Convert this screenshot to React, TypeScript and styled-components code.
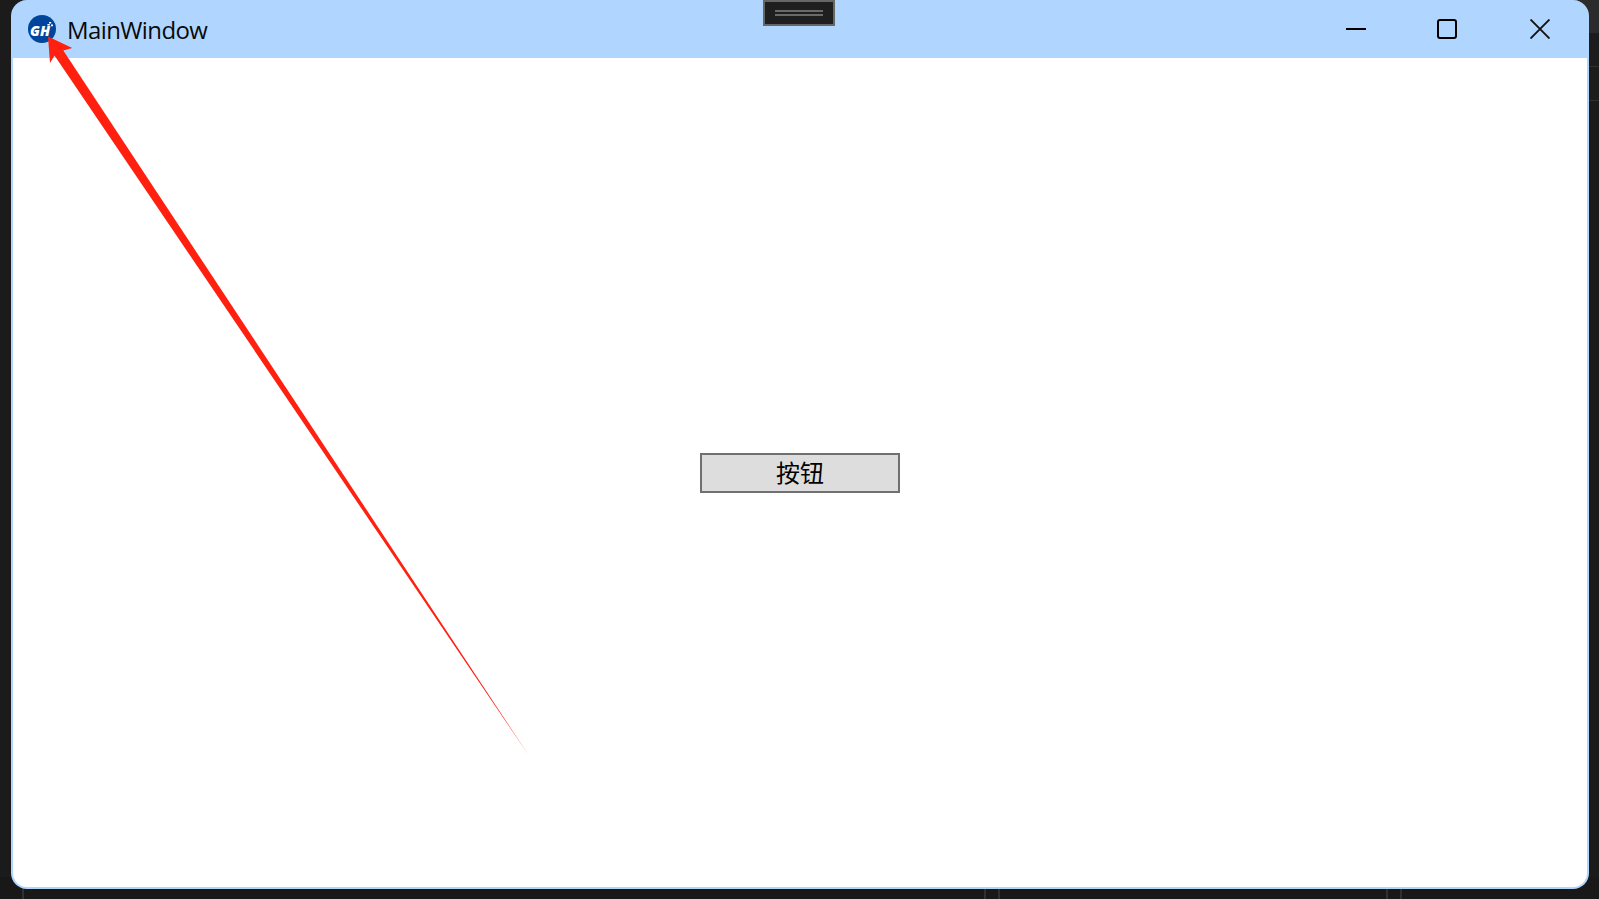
import React from "react";
import styled, { createGlobalStyle } from "styled-components";

const GlobalStyle = createGlobalStyle`
  *, *::before, *::after { box-sizing: border-box; }
  html, body { margin: 0; padding: 0; overflow: hidden; background: #1b1b1b; }
`;

const Desktop = styled.div`
  position: relative;
  display: flex;
  width: 1599px;
  height: 899px;
  padding: 0 10px 10px 11px;
  background: #1b1b1b;
  overflow: hidden;
`;

/* Parts of the editor that stay visible around the window */
const EditorEdge = styled.div`
  position: absolute;
  top: 0;
  right: 0;
  width: 40px;
  height: 101px;
  display: grid;
  grid-template-rows: 33px 34px 34px;
`;

const EdgeRow = styled.div<{ $header?: boolean }>`
  background: ${(p) => (p.$header ? "#2b2b2b" : "#1c1c1c")};
  border-bottom: ${(p) => (p.$header ? "none" : "1px solid #303030")};
`;

const EditorFooter = styled.div`
  position: absolute;
  left: 0;
  right: 0;
  bottom: 0;
  height: 22px;
  background: #181818;
`;

const Splitter = styled.i<{ $x: number }>`
  position: absolute;
  left: ${(p) => p.$x}px;
  top: 0;
  width: 2px;
  height: 100%;
  background: #303030;
`;

const Window = styled.main`
  position: relative;
  flex: 1;
  display: flex;
  flex-direction: column;
  background: #b0d6ff;
  border: 2px solid #b0d6ff;
  border-top: 0;
  border-radius: 16px;
  overflow: hidden;
`;

const TitleBar = styled.header`
  flex: 0 0 58px;
  display: flex;
  align-items: center;
  padding-left: 15px;
`;

const Title = styled.h1`
  margin: 0 auto 0 11px;
  padding-top: 2px;
  font: 400 24px/32px "Open Sans", "Noto Sans", sans-serif;
  letter-spacing: -0.6px;
  color: #0a0a0a;
`;

const Controls = styled.nav`
  display: flex;
  height: 100%;
  margin-right: 1px;
`;

const ControlButton = styled.button<{ $width?: number }>`
  display: flex;
  align-items: center;
  justify-content: center;
  width: ${(p) => p.$width ?? 92}px;
  padding: 0;
  border: 0;
  background: transparent;
  color: #000;
`;

const Content = styled.section`
  flex: 1;
  display: flex;
  align-items: center;
  justify-content: center;
  background: #fff;
`;

const PushButton = styled.button`
  width: 200px;
  height: 40px;
  margin-top: 1px;
  padding: 0 0 2px;
  border: 2px solid #707070;
  border-radius: 0;
  background: #ddd;
  color: #000;
  font: 400 24px/32px "Noto Sans CJK SC", sans-serif;
`;

const DebugHandle = styled.div`
  position: absolute;
  left: 763px;
  top: 0;
  display: flex;
  flex-direction: column;
  align-items: center;
  justify-content: center;
  gap: 2px;
  width: 72px;
  height: 26px;
  border: 2px solid #666;
  background: #1f1f1f;
`;

const Grip = styled.span`
  width: 48px;
  height: 2px;
  background: #6a6a6a;
`;

const Annotation = styled.svg`
  position: absolute;
  left: 0;
  top: 0;
  pointer-events: none;
`;

const AppIcon = () => (
  <svg width="28" height="28" viewBox="0 0 28 28">
    <circle cx="14" cy="14" r="14" fill="#00459b" />
    <text
      x="2"
      y="21"
      fill="#fff"
      fontFamily="Open Sans, sans-serif"
      fontSize="13.5"
      fontWeight="800"
      fontStyle="italic"
      textLength="20"
      lengthAdjust="spacingAndGlyphs"
    >
      GH
    </text>
    <path d="M21 7h2.2v1.6h-2.2zM19.4 9h2.4v1.5h-2.4zM23 9.4h2v1.8h-2z" fill="#fff" />
  </svg>
);

export default function App() {
  return (
    <Desktop>
      <GlobalStyle />
      <EditorEdge>
        <EdgeRow $header />
        <EdgeRow />
        <EdgeRow />
      </EditorEdge>
      <EditorFooter>
        {[22, 984, 998, 1386, 1400].map((x) => (
          <Splitter key={x} $x={x} />
        ))}
      </EditorFooter>
      <Window>
        <TitleBar>
          <AppIcon />
          <Title>MainWindow</Title>
          <Controls>
            <ControlButton aria-label="Minimize" $width={88}>
              <svg width="20" height="20" viewBox="0 0 20 20">
                <path d="M0 10h20" stroke="currentColor" strokeWidth="2" />
              </svg>
            </ControlButton>
            <ControlButton aria-label="Maximize" $width={94}>
              <svg width="20" height="20" viewBox="0 0 20 20">
                <rect x="1" y="1" width="18" height="18" rx="2" fill="none" stroke="currentColor" strokeWidth="2" />
              </svg>
            </ControlButton>
            <ControlButton aria-label="Close">
              <svg width="20" height="20" viewBox="0 0 20 20">
                <path d="M.5.5l19 19M19.5.5l-19 19" stroke="#111" strokeWidth="1.9" />
              </svg>
            </ControlButton>
          </Controls>
        </TitleBar>
        <Content>
          <PushButton>按钮</PushButton>
        </Content>
      </Window>
      <DebugHandle>
        <Grip />
        <Grip />
      </DebugHandle>
      <Annotation width="560" height="770" viewBox="0 0 560 770">
        <path d="M48 36.5L72.3 48L63.3 50.5L528.5 755L54.5 55.5L50 63Z" fill="#ff2010" />
      </Annotation>
    </Desktop>
  );
}
